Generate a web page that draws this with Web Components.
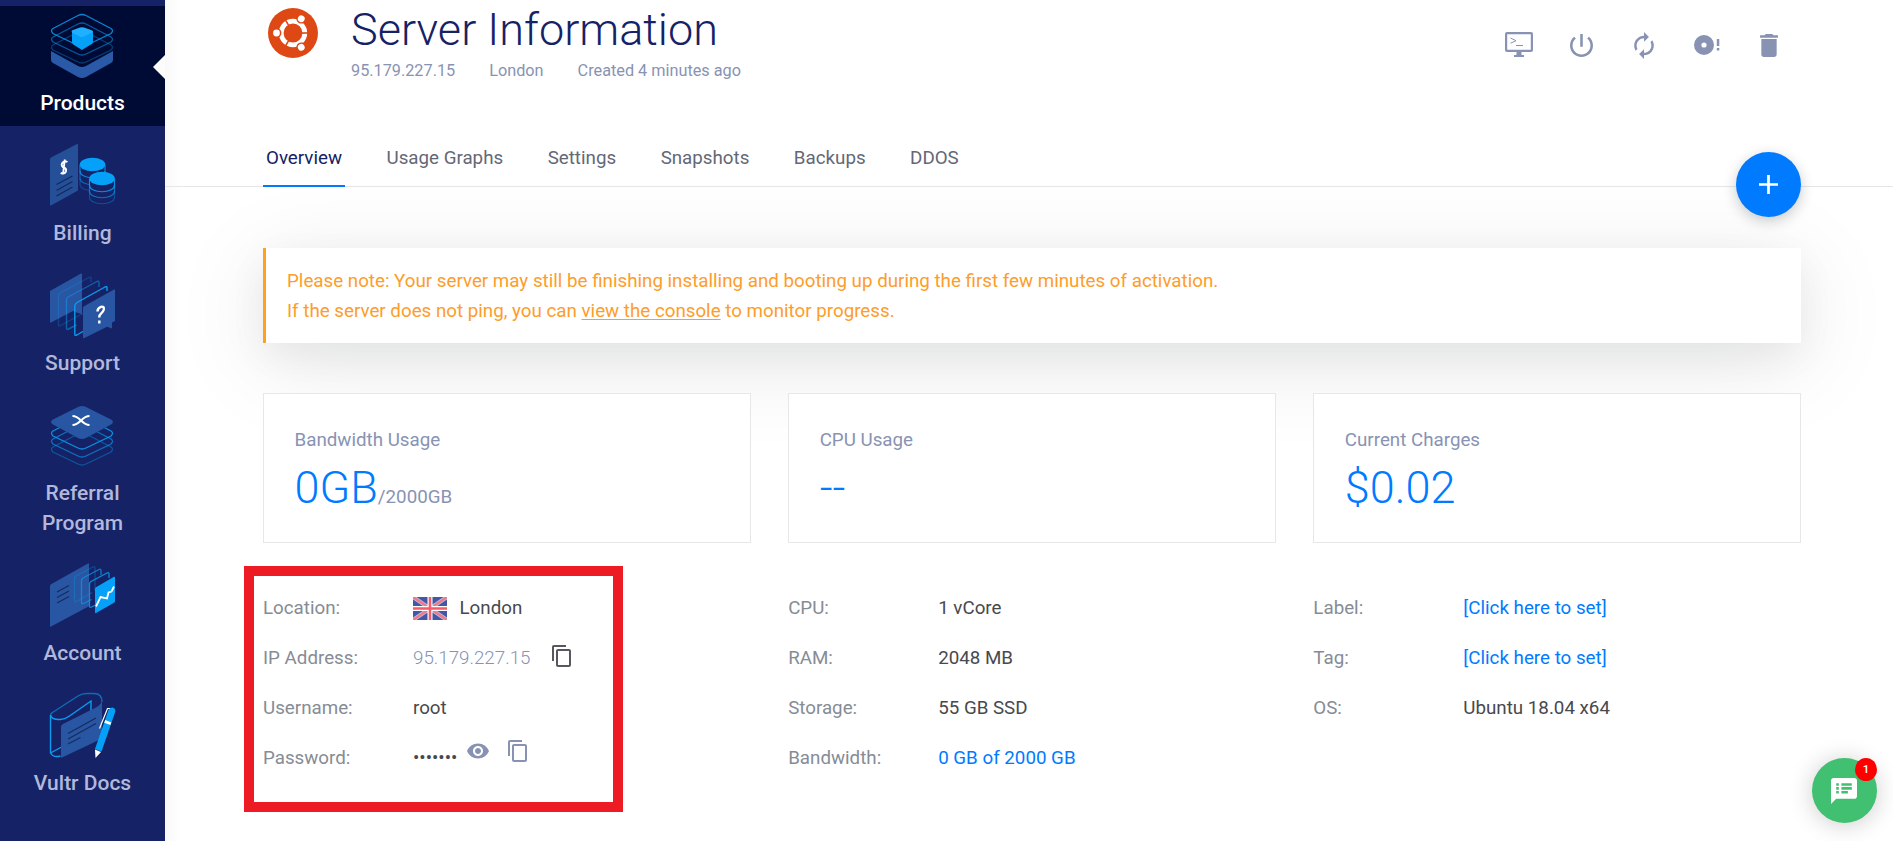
<!DOCTYPE html>
<html lang="en"><head><meta charset="utf-8"><title>Server Information</title>
<style>
html,body{margin:0;height:100%;overflow:hidden}
body{font-family:Roboto,sans-serif;font-size:18.75px;background:#fff;color:#47494d}
</style></head><body>
<server-page></server-page>
<script>
const define=(name,html,setup)=>customElements.define(name,class extends HTMLElement{
  constructor(){super();const t=document.createElement('template');t.innerHTML=html;
    this.attachShadow({mode:'open'}).append(t.content.cloneNode(true));}
  connectedCallback(){if(setup)setup(this,this.shadowRoot);}
});

/* ---- illustrations of the side menu, 66px wide ---- */
const dia=(y,o,c='#0b9bf0')=>`<path d="M33 ${y}q2 0 4 1L62 ${y+14}q3 2 0 5L37 ${y+31}q-4 2-8 0L4 ${y+19}q-3-3 0-5L29 ${y+1}q2-1 4-1z" fill="none" stroke="${c}" stroke-width="1.3" opacity="${o}"/>`;
const art={
products:`<path d="M2 38L29 53q4 2 8 0L64 38v9q0 2-2 3L37 64q-4 2-8 0L4 50q-2-1-2-3z" fill="#2a59a8"/>${dia(18,.35)}${dia(10,.55)}${dia(1.5,.85)}<path d="M23 18v11q0 2 2 3l8 5 8-5q3-1 3-3V18z" fill="#05a0f7"/><path d="M24 17l7-2.500q2-.7 4 0l7 2.500q3 1 .5 3L35 23.500q-2 1-4 0L24 20q-3-2 0-3z" fill="#1fb0ff"/>`,
billing:`<path d="M1 16Q1 15 2 14.500L28 1q1-.5 1 1v45.500L2 62.500q-1 .5-1-.7z" fill="#254f97"/><path d="M7.500 41.500L23.500 33M7.500 47.500L23.500 38.500M7.500 53L23.500 44" stroke="#15295f" stroke-width="1.400"/><path d="M18.300 19.300q-1.500-2-4-.3-3 2.500-.5 5 4 1.200 3.200 4.300-1.500 3.500-5.300 1.500M15.800 16.500l-1.800 15" fill="none" stroke="#fff" stroke-width="1.900"/>
<g fill="none" stroke="#0b9bf0" stroke-width="1.200"><path d="M31 22v6c0 9 25 9 25 0v-6" opacity=".8"/><path d="M31 28v7c0 9 25 9 25 0v-7" opacity=".55"/><path d="M31 35v6c0 9 25 9 25 0v-6" opacity=".3"/></g><ellipse cx="43.500" cy="21.500" rx="12.800" ry="6.800" fill="#05a0f7"/>
<path d="M41 36v18q12 10 24 0V36z" fill="#152366"/><g fill="none" stroke="#0b9bf0" stroke-width="1.200"><path d="M40.500 36v6c0 9 25 9 25 0v-6" opacity=".9"/><path d="M40.500 42v6c0 9 25 9 25 0v-6" opacity=".65"/><path d="M40.500 48v6c0 9 25 9 25 0v-6" opacity=".35"/></g><ellipse cx="53" cy="35.500" rx="12.800" ry="6.800" fill="#05a0f7"/>`,
support:`<path d="M1 18L32 .5q1-.5 1 1V41l-4-1-5-2L2 49.500q-1 .3-1-1z" fill="#2856a2"/><g fill="none" stroke="#0b9bf0" stroke-width="1.400"><path d="M42 9V5q0-1.500-2-.5L11 20q-1.500 1-1.500 2.500v29q0 2 2 1l28-15" opacity=".25"/><path d="M50 14V9.500q0-2-2-1L19 24q-1.500 1-1.500 2.500V55q0 2 2 1l8-4" opacity=".5"/><path d="M58 18v-3.500q0-1.500-2-.5L28 29.500Q25.800 31 25.800 33v28q0 2 2 1l7-4"/></g><path d="M34 35q0-1.200 1-1.700L65 16.500q1-.5 1 .7V48l-3 1.500v6L58 53.700 35 65.300q-1 .3-1-1z" fill="#2856a2"/><path d="M48.500 38.500q0-3.500 3.500-4.700 3.500-.8 2.700 3-.5 2-2.500 3.600-2 1.600-2 4.100M50.300 47.500v3" fill="none" stroke="#fff" stroke-width="2.400"/>`,
referral:`${dia(27,.4)}${dia(19,.65)}${dia(11,.9)}<path d="M33 0q2 0 4 1L62 13.500q4 2.500 0 5L37 32q-4 2-8 0L4 18.500q-4-2.500 0-5L29 1q2-1 4-1z" fill="#2856a2"/><path d="M23.500 10q4 0 8.500 4.500t8.500 4.500M23.500 19q4 0 8.500-4.500t8.500-4.500" fill="none" stroke="#fff" stroke-width="2.200"/>`,
account:`<path d="M1 23q0-1 1-1.700L39 .5q1-.5 1 .7v42L2 63.500q-1 .5-1-.7z" fill="#2856a2"/><path d="M8 29l12-6.500M8 34.500L20 28M8 40l12-6.500" stroke="#172c60" stroke-width="1.400"/><g fill="none" stroke="#0b9bf0" stroke-width="1.300"><path d="M46 28V5q0-2-2-1L27 13q-1.500 1-1.500 2.500v22q0 2 2 1l16-9" opacity=".3"/><path d="M52 12V7.500q0-2-2-1L34 15q-1.500 1-1.500 2.500v22q0 2 2 1l8-4" opacity=".7"/><path d="M60 15v-4q0-2-2-1L42 18.500q-1.500 1-1.500 2.500v22q0 2 2 1l5-2.500" opacity=".85"/></g><path d="M46 26q0-1.200 1-1.700l18-10.500q1-.5 1 .7V38q0 1-1 1.700L47 50q-1 .5-1-.7z" fill="#05a0f7"/><path d="M47 43.500l4.500-9.500 6.500 1.500 1.500-6 3-1 2.500-5" fill="none" stroke="#fff" stroke-width="1.800"/>`,
docs:`<g fill="none" stroke="#0b9bf0" stroke-width="1.400"><path d="M1.500 22.500q0-2 2-3L29 3q4-2.500 9-2.500h7q8 0 8 8.500" opacity=".6"/><path d="M1.500 22V60q3 5 10 3M1.500 22q1 5 10 4.500 5-.5 9-3.500L42 8v10M1.500 60l12-6.500"/></g><path d="M12 34q0-2 2-3L46 15q7-3 7-9v36q0 3-3 5L12 65z" fill="#2856a2"/><path d="M19 40.500l28-15.500M19 46l28-15.500M19 51l12.500-6.500" stroke="#172c60" stroke-width="1.400"/><path d="M50.500 35.500l8-20h3" fill="none" stroke="#fff" stroke-width="1.200"/><path d="M59.500 17q3-4 6-1.500 1.300 2 .5 4L52.500 58.500 46 56z" fill="#05a0f7"/><path d="M56.300 27l6 2.500-1 2.600-6-2.400z" fill="#fff"/><path d="M46 56.500l6 2.500-5.500 6z" fill="#fff"/>`};

define('nav-item',`<style>
:host{display:block;position:relative;box-sizing:border-box;height:130px;padding-top:7px;text-align:center;color:#b1b8dc;font:500 21px/30px Roboto,sans-serif}
:host([active]){height:120px;margin-bottom:10px;background:#000b35;color:#fff}
:host([tall]){height:160px}
:host([active])::after{content:"";position:absolute;right:0;top:49px;border:12.500px solid transparent;border-left:0;border-right-color:#fcfcfc}
svg{display:block;margin:0 0 0 49px;width:66px;height:75px;overflow:visible}
</style><svg viewBox="0 0 66 75"></svg><div><slot></slot></div>`,(h,r)=>{
  const s=r.querySelector('svg');s.innerHTML=art[h.getAttribute('art')];
  s.setAttribute('viewBox',`0 ${-(h.getAttribute('dy')||0)} 66 75`);});

define('side-nav',`<style>
:host{display:block;width:165px;height:841px;background:#152366;box-sizing:border-box;padding-top:6px;flex:none}
</style>
<nav-item art="products" active dy="0">Products</nav-item>
<nav-item art="billing" dy="0">Billing</nav-item>
<nav-item art="support" dy="0">Support</nav-item>
<nav-item art="referral" dy="3" tall>Referral<br>Program</nav-item>
<nav-item art="account" dy="0">Account</nav-item>
<nav-item art="docs" dy="0">Vultr Docs</nav-item>`);

/* ---- small icons: view box and shapes ---- */
const icons={
copy:['2 1 19 22','<path d="M16 1H4c-1.100 0-2 .9-2 2v14h2V3h12V1zm3 4H8c-1.100 0-2 .9-2 2v14c0 1.100.9 2 2 2h11c1.100 0 2-.9 2-2V7c0-1.100-.9-2-2-2zm0 16H8V7h11v14z"/>'],
console:['0 0 28 26','<path fill-rule="evenodd" d="M2 0h24a2 2 0 0 1 2 2v16a2 2 0 0 1-2 2h-9.500v3H19v2H9v-2h2.500v-3H2a2 2 0 0 1-2-2V2a2 2 0 0 1 2-2zm.2 2.200v15.600h23.600V2.200z"/><path d="M5.500 6l5.500 2.700-5.500 2.500M11 13.500h7" fill="none" stroke="currentColor"/>'],
power:['3 3 18 18','<path d="M13 3h-2v10h2V3zm4.830 2.170l-1.420 1.420C17.990 7.860 19 9.810 19 12c0 3.870-3.130 7-7 7s-7-3.130-7-7c0-2.190 1.010-4.140 2.580-5.420L6.170 5.170C4.230 6.820 3 9.260 3 12c0 4.970 4.030 9 9 9s9-4.030 9-9c0-2.740-1.230-5.180-3.170-6.830z"/>'],
sync:['4 1 16 22','<path d="M12 6v3l4-4-4-4v3c-4.420 0-8 3.580-8 8 0 1.570.46 3.030 1.240 4.260L6.700 14.800c-.45-.83-.7-1.790-.7-2.800 0-3.310 2.690-6 6-6zm6.760 1.740L17.300 9.200c.44.840.7 1.790.7 2.800 0 3.310-2.690 6-6 6v-3l-4 4 4 4v-3c4.420 0 8-3.580 8-8 0-1.570-.46-3.030-1.240-4.260z"/>'],
disc:['0 0 26 20','<path fill-rule="evenodd" d="M10 0a10 10 0 1 1 0 20 10 10 0 0 1 0-20zm0 7.400a2.600 2.600 0 1 0 0 5.200 2.600 2.600 0 0 0 0-5.200zM22.800 4h2.500v7h-2.500zm0 9h2.500v2.500h-2.500z"/>'],
trash:['5 3 14 18','<path d="M6 19c0 1.100.9 2 2 2h8c1.100 0 2-.9 2-2V7H6v12zM19 4h-3.500l-1-1h-5l-1 1H5v2h14V4z"/>'],
plus:['5 5 14 14','<path d="M19 13h-6v6h-2v-6H5v-2h6V5h2v6h6v2z"/>'],
eye:['1 4 22 16','<path d="M12 4.500C7 4.500 2.730 7.610 1 12c1.730 4.390 6 7.500 11 7.500s9.270-3.110 11-7.500c-1.730-4.390-6-7.500-11-7.500zM12 17c-2.760 0-5-2.240-5-5s2.240-5 5-5 5 2.240 5 5-2.240 5-5 5zm0-8c-1.660 0-3 1.340-3 3s1.340 3 3 3 3-1.340 3-3-1.340-3-3-3z"/>'],
chat:['2 2 20 20','<path d="M20 2H4c-1.100 0-1.990.9-1.990 2L2 22l4-4h14c1.100 0 2-.9 2-2V4c0-1.100-.9-2-2-2zM8 14H6v-2h2v2zm0-3H6V9h2v2zm0-3H6V6h2v2zm7 6h-5v-2h5v2zm3-3h-8V9h8v2zm0-3h-8V6h8v2z"/>']};
define('ui-icon',`<style>:host{display:block;flex:none}svg{display:block;width:100%;height:100%;fill:currentColor}</style><svg></svg>`,(h,r)=>{
  const [v,p]=icons[h.getAttribute('name')],s=r.querySelector('svg');s.setAttribute('viewBox',v);s.innerHTML=p;
  h.style.width=h.getAttribute('w')+'px';h.style.height=h.getAttribute('h')+'px';});

define('server-header',`<style>
:host{display:flex;height:126px;padding:0 0 0 5px}
.logo{width:50px;height:50px;margin-top:8px;flex:none}
.txt{margin-left:33px;flex:1}
h1{margin:0;font:300 45px/60px Roboto,sans-serif;color:#152366;white-space:nowrap}
.meta{display:flex;gap:34px;margin-top:1px;font-size:16.250px;line-height:20px;color:#8893b3}
.tools{display:flex;height:50px;margin-top:20px;color:#8893b3}
.tools>*{display:flex;justify-content:center;align-items:center;width:62.500px}
.tools{margin-right:.5px}
</style>
<svg class="logo" viewBox="-25 -25 50 50"><circle r="25" fill="#dd4814"/><circle r="11.800" fill="none" stroke="#fff" stroke-width="4.800"/>
<g><path d="M9 0h8" stroke="#dd4814" stroke-width="1.600"/><circle cx="-16.500" r="4.900" fill="#dd4814"/><circle cx="-16.500" r="3.400" fill="#fff"/></g><g transform="rotate(120)"><path d="M9 0h8" stroke="#dd4814" stroke-width="1.600"/><circle cx="-16.500" r="4.900" fill="#dd4814"/><circle cx="-16.500" r="3.400" fill="#fff"/></g><g transform="rotate(240)"><path d="M9 0h8" stroke="#dd4814" stroke-width="1.600"/><circle cx="-16.500" r="4.900" fill="#dd4814"/><circle cx="-16.500" r="3.400" fill="#fff"/></g></svg>
<div class="txt"><h1>Server Information</h1><div class="meta"><span>95.179.227.15</span><span>London</span><span>Created 4 minutes ago</span></div></div>
<div class="tools"><span><ui-icon name="console" w="28" h="26"></ui-icon></span><span><ui-icon name="power" w="23" h="23"></ui-icon></span><span><ui-icon name="sync" w="20" h="27"></ui-icon></span><span><ui-icon name="disc" w="26" h="20"></ui-icon></span><span><ui-icon name="trash" w="18" h="23"></ui-icon></span></div>`);

define('tab-bar',`<style>
:host{display:flex;position:relative;height:60px;border-bottom:1px solid #e6e6e8;padding-left:98px;gap:38.500px;line-height:64px;color:#636877}
span{padding:0 3px;height:58px}
.on{color:#152366;border-bottom:2px solid #007bff;margin-bottom:-1px;padding-bottom:1px}
span:first-child{padding-right:2.500px}
.fab{position:absolute;left:1571px;top:26px;width:65px;height:65px;border-radius:50%;background:#007bff;color:#fff;display:flex;align-items:center;justify-content:center;box-shadow:0 4px 14px rgba(0,20,20,.22)}
.fab ui-icon{margin:-1px 1px 0 0}
</style><span class="on">Overview</span><span>Usage Graphs</span><span>Settings</span><span>Snapshots</span><span>Backups</span><span>DDOS</span><div class="fab"><ui-icon name="plus" w="19" h="19"></ui-icon></div>`);

define('notice-box',`<style>
:host{display:block;box-sizing:border-box;height:95px;border-left:3px solid #ffa01e;padding:17.500px 20px 0 21px;line-height:30px;color:#fd9d2b;background:#fff;box-shadow:0 18px 95px rgba(0,20,20,.1),0 12px 38px rgba(0,20,20,.055)}
</style><slot></slot>`);

define('stat-card',`<style>
:host{display:block;box-sizing:border-box;height:150px;border:1px solid #e6e7e8;padding:31px 30.500px;background:#fff;color:#8893b3;line-height:30px}
.v{line-height:65px;white-space:nowrap}
b{font-weight:300;font-size:45px;color:#007bff}
</style><slot name="t"></slot><div class="v"><b><slot name="v"></slot></b><slot></slot></div>`);

define('info-row',`<style>
:host{display:flex;height:50px;line-height:50px;white-space:nowrap}
.k{width:150px;flex:none;color:#868c95}
.v{display:flex;align-items:center;color:#47494d}
:host([link]) .v{color:#007bff}
:host([light]) .v{font-weight:300;color:#8893b3}
</style><div class="k"><slot name="k"></slot></div><div class="v"><slot></slot></div>`);

define('uk-flag',`<style>:host{display:block;margin:2px 12.500px 0 0}svg{display:block}</style>
<svg width="34" height="23" viewBox="0 0 34 23"><path fill="#4257a5" d="M0 0h34v23H0z"/><path d="M0 0l34 23M34 0L0 23" stroke="#b9c1e0" stroke-width="4"/><path d="M0 0l34 23M34 0L0 23" stroke="#f0788a" stroke-width="2.400"/><path d="M17 0v23M0 11.500h34" stroke="#fff" stroke-width="5"/><path d="M17 0v23M0 11.500h34" stroke="#f35c6b" stroke-width="2.600"/></svg>`);

define('chat-button',`<style>
:host{position:absolute;left:1812px;top:758px;width:65px;height:65px;border-radius:50%;background:#40c070;color:#fff;display:flex;align-items:center;justify-content:center;box-shadow:0 2px 24px rgba(0,0,0,.2)}
ui-icon{margin-right:1.500px}
b{position:absolute;right:0;top:0;width:22px;height:23px;border-radius:50%;background:#f00;font:500 11.500px/23px Roboto,sans-serif;text-align:center}
</style><ui-icon name="chat" w="26" h="26"></ui-icon><b>1</b>`);

define('server-page',`<style>
:host{display:flex;width:1893px;height:841px;overflow:hidden;position:relative}
main{flex:1;min-width:0;position:relative;background:linear-gradient(90deg,#f9f9f9,#fff 16px)}
server-header{margin:0 92px 0 98px}
tab-bar{z-index:2}
.body{padding:61px 92px 0 98px}
.grid{display:grid;grid-template-columns:repeat(3,1fr);column-gap:37.500px}
.cards{margin-top:50px;position:relative}
.info{margin-top:39.500px}
u{text-underline-offset:2px}
.hl{position:absolute;left:244px;top:566px;width:359px;height:226px;border:10px solid #ed1c24}
</style><side-nav></side-nav><main><server-header></server-header><tab-bar></tab-bar><div class="body">
<notice-box>Please note: Your server may still be finishing installing and booting up during the first few minutes of activation.<br>If the server does not ping, you can <u>view the console</u> to monitor progress.</notice-box>
<div class="grid cards"><stat-card><span slot="t">Bandwidth Usage</span><span slot="v">0GB</span>/2000GB</stat-card><stat-card><span slot="t">CPU Usage</span><span slot="v">--</span></stat-card><stat-card><span slot="t">Current Charges</span><span slot="v">$0.02</span></stat-card></div>
<div class="grid info"><div>
<info-row><span slot="k">Location:</span><uk-flag></uk-flag>London</info-row>
<info-row light><span slot="k">IP Address:</span>95.179.227.15<ui-icon name="copy" w="19" h="22" style="margin-left:22px;margin-top:-3px;color:#55585e"></ui-icon></info-row>
<info-row><span slot="k">Username:</span>root</info-row>
<info-row><span slot="k">Password:</span>•••••••<ui-icon name="eye" w="22" h="16" style="margin:-13px 19px 0 10px;color:#8893b3"></ui-icon><ui-icon name="copy" w="19" h="22" style="margin-top:-13px;color:#8893b3"></ui-icon></info-row></div><div>
<info-row><span slot="k">CPU:</span>1 vCore</info-row><info-row><span slot="k">RAM:</span>2048 MB</info-row><info-row><span slot="k">Storage:</span>55 GB SSD</info-row><info-row link><span slot="k">Bandwidth:</span>0 GB of 2000 GB</info-row></div><div>
<info-row link><span slot="k">Label:</span>[Click here to set]</info-row><info-row link><span slot="k">Tag:</span>[Click here to set]</info-row><info-row><span slot="k">OS:</span>Ubuntu 18.04 x64</info-row></div></div>
</div></main><div class="hl"></div><chat-button></chat-button>`);
</script></body></html>
